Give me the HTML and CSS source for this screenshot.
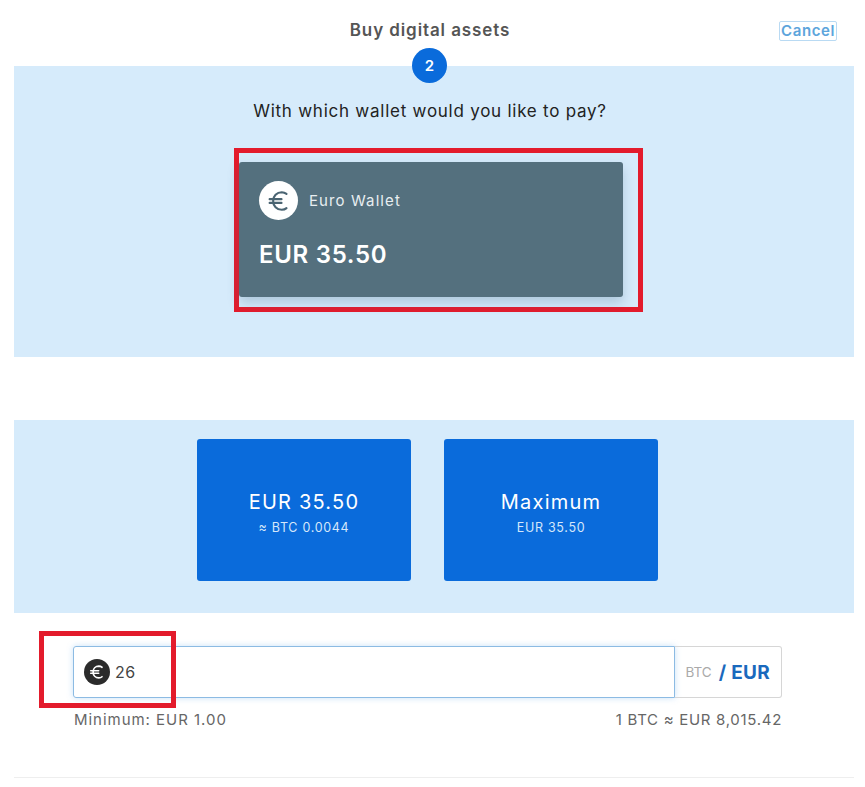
FILE: index.html
```html
<!DOCTYPE html>
<html lang="en">
<head>
    <meta charset="UTF-8">
    <meta name="viewport" content="width=device-width, initial-scale=1.0">
    <title>Buy digital assets</title>
    <link rel="stylesheet" href="styles.css">
</head>
<body>
    <div class="page">
        <div class="header">
            <h1>Buy digital assets</h1>
            <a href="#" class="cancel">Cancel</a>
            <span class="step">2</span>
        </div>

        <div class="panel wallet-panel">
            <p class="question">With which wallet would you like to pay?</p>
            <div class="highlight">
                <div class="wallet-card">
                    <div class="wallet-top">
                        <span class="coin">
                            <svg width="30" height="30" viewBox="0 0 24 24" fill="none" stroke="#4a6472" stroke-width="1.700" stroke-linecap="round">
                                <path d="M18 6.300A7.600 7.600 0 0 0 14.200 5C10.200 5 7.300 8 7.300 12s2.900 7 6.900 7c1.500 0 2.800-.4 3.800-1.300"/>
                                <path d="M4.500 10.500h9.500M4.500 13.500h9.500"/>
                            </svg>
                        </span>
                        <span class="wallet-name">Euro Wallet</span>
                    </div>
                    <div class="wallet-amount">EUR 35.50</div>
                </div>
            </div>
        </div>

        <div class="panel amount-panel">
            <button class="amount-btn">
                <span class="amount-main">EUR 35.50</span>
                <span class="amount-sub">≈ BTC 0.0044</span>
            </button>
            <button class="amount-btn">
                <span class="amount-main">Maximum</span>
                <span class="amount-sub">EUR 35.50</span>
            </button>
        </div>

        <div class="form">
            <div class="input-row">
                <div class="input-box">
                    <span class="coin-small">
                        <svg width="20" height="20" viewBox="0 0 24 24" fill="none" stroke="#fff" stroke-width="2" stroke-linecap="round">
                            <path d="M18 6.300A7.600 7.600 0 0 0 14.200 5C10.200 5 7.300 8 7.300 12s2.900 7 6.900 7c1.500 0 2.800-.4 3.800-1.300"/>
                            <path d="M4.500 10.500h9.500M4.500 13.500h9.500"/>
                        </svg>
                    </span>
                    <span class="input-value">26</span>
                </div>
                <div class="currency-switch">
                    <span class="btc">BTC</span>
                    <span class="eur">/ EUR</span>
                </div>
            </div>
            <div class="input-notes">
                <span class="note-min">Minimum: EUR 1.00</span>
                <span class="note-rate">1 BTC ≈ EUR 8,015.42</span>
            </div>
            <div class="red-mark"></div>
        </div>

        <hr class="divider">
    </div>
</body>
</html>
```

FILE: styles.css
```css
body {
    font-family: Inter, "Noto Sans", sans-serif;
    margin: 0;
    background-color: #fff;
    color: #333;
}

.page {
    padding: 0 11px 0 14px;
}

.header {
    position: relative;
    height: 66px;
    text-align: center;
}

.header h1 {
    margin: 0;
    padding: 20px 8px 0 0;
    font-size: 17px;
    line-height: 21px;
    font-weight: 600;
    color: #555;
    letter-spacing: 0.9px;
}

.cancel {
    position: absolute;
    top: 21px;
    right: 17px;
    padding: 0 1px;
    font-size: 15px;
    line-height: 18px;
    font-weight: 600;
    color: #5da5dc;
    text-decoration: none;
    letter-spacing: 0.6px;
    border: 1px solid #b9daf3;
    border-radius: 2px;
}

.step {
    position: absolute;
    top: 48px;
    left: 398px;
    width: 35px;
    height: 35px;
    border-radius: 50%;
    background-color: #0a6bdb;
    color: #fff;
    font-size: 15px;
    font-weight: 600;
    line-height: 35px;
    text-align: center;
}

.panel {
    background-color: #d6ebfb;
}

.wallet-panel {
    height: 291px;
    box-sizing: border-box;
    padding-top: 35px;
    margin-bottom: 63px;
}

.question {
    margin: 0 0 27px;
    padding-right: 8px;
    text-align: center;
    font-size: 17px;
    line-height: 20px;
    letter-spacing: 0.75px;
    color: #222;
}

.highlight {
    width: 409px;
    height: 164px;
    box-sizing: border-box;
    margin-left: 220px;
    border: 5px solid #e31b2c;
    padding: 9px 15px 0 0;
}

.wallet-card {
    height: 135px;
    box-sizing: border-box;
    padding: 19px 20px;
    background-color: #54707e;
    border-radius: 3px;
    box-shadow: 0 6px 12px rgba(60, 100, 130, 0.25);
    color: #fff;
}

.wallet-top {
    display: flex;
    align-items: center;
    gap: 11px;
}

.coin {
    display: flex;
    align-items: center;
    justify-content: center;
    width: 39px;
    height: 39px;
    border-radius: 50%;
    background-color: #fff;
}

.wallet-name {
    font-size: 15px;
    letter-spacing: 1.100px;
    color: #e8eef1;
}

.wallet-amount {
    margin-top: 20px;
    font-size: 24px;
    line-height: 30px;
    font-weight: 600;
    letter-spacing: 0.7px;
}

.amount-panel {
    height: 193px;
    box-sizing: border-box;
    padding: 19px 13px 0 0;
    display: flex;
    justify-content: center;
    gap: 33px;
    margin-bottom: 33px;
}

.amount-btn {
    width: 214px;
    height: 142px;
    display: flex;
    flex-direction: column;
    align-items: center;
    justify-content: center;
    padding: 4px 0 0;
    border: none;
    border-radius: 3px;
    background-color: #0a6bdb;
    color: #fff;
    font-family: inherit;
}

.amount-main {
    font-size: 20px;
    line-height: 26px;
    letter-spacing: 1.200px;
}

.amount-sub {
    margin-top: 4px;
    font-size: 12.500px;
    line-height: 17px;
    letter-spacing: 0.7px;
    color: #d5e7fa;
}

.form {
    position: relative;
    width: 709px;
    margin-left: 59px;
}

.input-row {
    display: flex;
    height: 52px;
}

.input-box {
    flex: 1;
    display: flex;
    align-items: center;
    gap: 5px;
    padding-left: 10px;
    border: 1px solid #8cbbe3;
    border-radius: 3px 0 0 3px;
    box-shadow: 0 0 6px rgba(100, 170, 235, 0.35);
}

.coin-small {
    display: flex;
    align-items: center;
    justify-content: center;
    width: 26px;
    height: 26px;
    border-radius: 50%;
    background-color: #2b2b2b;
}

.input-value {
    font-size: 16px;
    letter-spacing: 0.5px;
    color: #444;
}

.currency-switch {
    width: 107px;
    box-sizing: border-box;
    display: flex;
    align-items: center;
    justify-content: flex-end;
    gap: 7px;
    padding-right: 11px;
    border: 1px solid #d6d6d6;
    border-left: none;
    border-radius: 0 3px 3px 0;
}

.btc {
    font-size: 13.500px;
    color: #aaa;
}

.eur {
    font-size: 19px;
    font-weight: 700;
    letter-spacing: 0.3px;
    color: #1a69bd;
}

.input-notes {
    display: flex;
    justify-content: space-between;
    margin-top: 13px;
    padding-left: 1px;
    font-size: 15px;
    line-height: 18px;
    color: #666;
}

.note-min {
    letter-spacing: 0.97px;
}

.note-rate {
    letter-spacing: 0.7px;
}

.red-mark {
    position: absolute;
    top: -15px;
    left: -34px;
    width: 137px;
    height: 77px;
    box-sizing: border-box;
    border: 5px solid #e31b2c;
}

.divider {
    margin: 48px 0 0;
    border: none;
    border-top: 1px solid #eee;
}
```
